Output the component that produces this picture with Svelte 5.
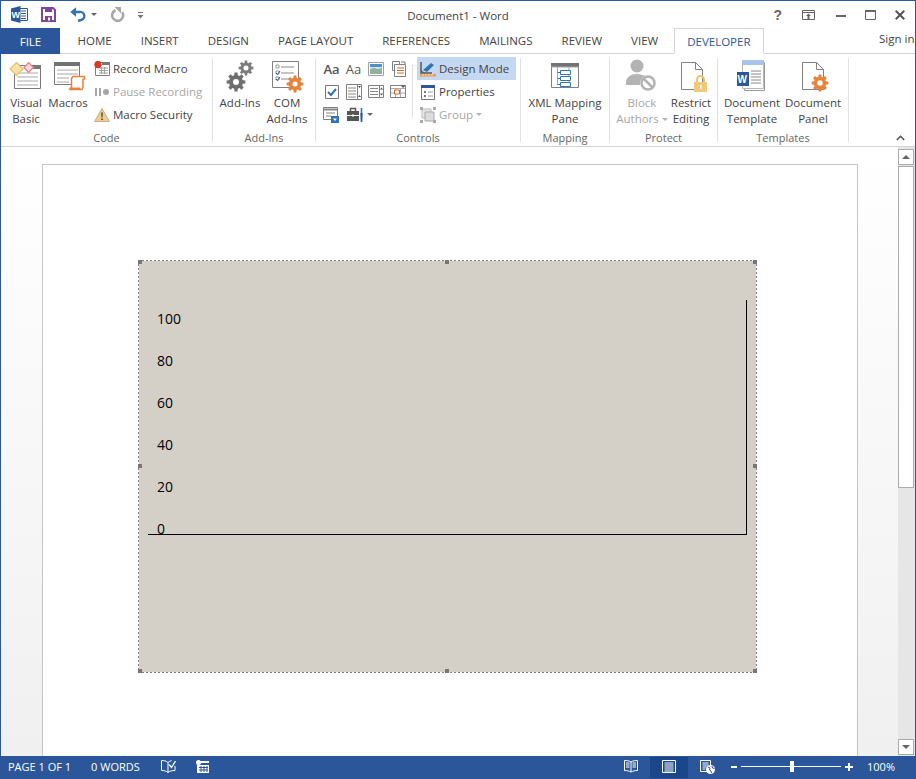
<script>
  function gear(cx, cy, R, r, hole, teeth = 8) {
    let d = '';
    const step = (Math.PI * 2) / teeth;
    for (let i = 0; i < teeth; i++) {
      const a = i * step;
      const pts = [[r, a - step * 0.34], [R, a - step * 0.2], [R, a + step * 0.2], [r, a + step * 0.34]];
      pts.forEach(([m, t], j) => {
        d += (i === 0 && j === 0 ? 'M' : 'L') + (cx + m * Math.cos(t)).toFixed(2) + ' ' + (cy + m * Math.sin(t)).toFixed(2) + ' ';
      });
    }
    d += 'Z M' + (cx + hole) + ' ' + cy + ' a' + hole + ' ' + hole + ' 0 1 0 ' + -2 * hole + ' 0 a' + hole + ' ' + hole + ' 0 1 0 ' + 2 * hole + ' 0 Z';
    return d;
  }
  const tabs = ['HOME', 'INSERT', 'DESIGN', 'PAGE LAYOUT', 'REFERENCES', 'MAILINGS', 'REVIEW', 'VIEW'];
  const ticks = [100, 80, 60, 40, 20, 0];
</script>

<div class="window">
  <header class="titlebar">
    <div class="qat">
      <svg class="q-word" width="17" height="17" viewBox="0 0 17 17">
        <path d="M6 2.500h10.500v12H6z" fill="#fff" stroke="#2b579a"/>
        <path d="M10 5h5M10 7.500h5M10 10h5M10 12.500h5" stroke="#2b579a"/>
        <path d="M0 2.500 9.500 0v17L0 14.500z" fill="#2b579a"/>
        <text x="0.600" y="11.500" class="w-mark">W</text>
      </svg>
      <svg class="q-save" width="15" height="15" viewBox="0 0 15 15">
        <path d="M1 1h11l2 2v11H1z" fill="#fff" stroke="#80459b" stroke-width="2"/>
        <path d="M4 1h7v4H4z" fill="#80459b"/>
        <path d="M4 9h7v5H4z" fill="#80459b"/>
        <path d="M7 10.500h2v3H7z" fill="#fff"/>
      </svg>
      <svg class="q-undo" width="16" height="15" viewBox="0 0 16 15">
        <path d="M3 5h6.500a4 4 0 0 1 1.500 8L8 14" fill="none" stroke="#2e75b5" stroke-width="2.400"/>
        <path d="M6 0.300v9.400L0.300 5z" fill="#2e75b5"/>
      </svg>
      <span class="caret q-c1"></span>
      <svg class="q-redo" width="15" height="15" viewBox="0 0 15 15">
        <path d="M5.500 3.200a5.500 5.500 0 1 0 6.700 2" fill="none" stroke="#a6a6a6" stroke-width="2.600"/>
        <path d="M4.500 0h6.500v6.500z" fill="#a6a6a6"/>
      </svg>
      <svg class="q-more" width="7" height="8" viewBox="0 0 7 8">
        <path d="M1 1.500h5" stroke="#777"/>
        <path d="M0.500 4h6L3.500 7.500z" fill="#777"/>
      </svg>
    </div>
    <div class="doc-title">Document1 - Word</div>
    <div class="win-ctrl">
      <span class="help">?</span>
      <svg width="13" height="10" viewBox="0 0 13 10"><path d="M.5.500h12v9H.5zM.5 2.500h12" fill="none" stroke="#666"/><path d="M6.500 3.500 9 6H7.500v3h-2V6H4z" fill="#666"/></svg>
      <svg width="10" height="3" viewBox="0 0 10 3"><path d="M0 0h10v2H0z" fill="#666"/></svg>
      <svg width="11" height="10" viewBox="0 0 11 10"><path d="M.5 1h10v8.500H.5z" fill="none" stroke="#666"/><path d="M0 0h11v2H0z" fill="#666"/></svg>
      <svg width="10" height="10" viewBox="0 0 10 10"><path d="M.7.7l8.600 8.600M9.300.7.700 9.300" stroke="#555" stroke-width="2"/></svg>
    </div>
  </header>

  <nav class="tabs">
    <div class="tab-file">FILE</div>
    <div class="tab-list">
      {#each tabs as t}<span class="tab">{t}</span>{/each}
      <span class="tab active">DEVELOPER</span>
    </div>
    <div class="signin">Sign in</div>
  </nav>

  <section class="ribbon">
    <div class="group g-code">
      <div class="body">
        <div class="big w42">
          <svg width="34" height="35" viewBox="0 0 34 35">
            <path d="M5.500 5.500h26v23h-26z" fill="#fff" stroke="#7a7a7a"/>
            <path d="M22 5h10v4H22z" fill="#777"/>
            <path d="M8 13h21M8 17h21M8 21h21M8 25h21" stroke="#a8a8a8"/>
            <path d="M7.500 2.500 14 9l-6.500 6.500L1 9z" fill="#f8e2a9" stroke="#e9bd6b" stroke-width="1.200"/>
            <path d="M19.500 2.500 24.500 7.500 19.500 12.500 15 7.500z" fill="#fbd5dc" stroke="#e77f90" stroke-width="1.200"/>
          </svg>
          <span>Visual</span><span>Basic</span>
        </div>
        <div class="big w42">
          <svg width="34" height="35" viewBox="0 0 34 35">
            <path d="M3.500 2.500h25v22h-25z" fill="#fff" stroke="#7a7a7a"/>
            <path d="M3 2h26v4H3z" fill="#737373"/>
            <path d="M6 10h21M6 14h21M6 18h12M6 22h12" stroke="#a8a8a8"/>
            <path d="M22 16.500h11.500v2.500l-1.500.5v8l-1 2H19l1.500-2v-9z" fill="#fff" stroke="#e4843a" stroke-width="1.500"/>
            <path d="M18.500 27.500h11v2h-11z" fill="#e4843a"/>
          </svg>
          <span>Macros</span>
        </div>
        <div class="smalls">
          <div class="row">
            <svg width="16" height="16" viewBox="0 0 16 16">
              <path d="M1.500 1.500h14v13h-14z" fill="#fff" stroke="#808080"/>
              <path d="M8 1h8v3H8z" fill="#777"/>
              <path d="M5 7h9M5 9.500h9M5 12h9M7.500 6v7M10.500 6v7" stroke="#a0a0a0"/>
              <circle cx="4" cy="3.500" r="3.700" fill="#d83b26"/>
            </svg>
            <span>Record Macro</span>
          </div>
          <div class="row off">
            <svg width="16" height="16" viewBox="0 0 16 16">
              <path d="M1 4h2v8H1zM5 4h2v8H5z" fill="#a6a6a6"/><circle cx="12" cy="8" r="3" fill="#a6a6a6"/>
            </svg>
            <span>Pause Recording</span>
          </div>
          <div class="row">
            <svg width="16" height="16" viewBox="0 0 16 16">
              <path d="M8 1.500 15.500 14.500H.5z" fill="#f6cb85" stroke="#bdb29c"/>
              <path d="M7.200 5.500h1.600l-.3 5h-1zM7.200 11.500h1.600v1.600H7.200z" fill="#444"/>
            </svg>
            <span>Macro Security</span>
          </div>
        </div>
      </div>
      <div class="label">Code</div>
    </div>

    <div class="group g-addins">
      <div class="body">
        <div class="big w46">
          <svg width="34" height="35" viewBox="0 0 34 35">
            <path d={gear(13, 22, 9.500, 7, 3)} fill="#6e6e6e" fill-rule="evenodd"/>
            <path d={gear(23, 8, 7.500, 5.500, 2.500)} fill="#7c7c7c" fill-rule="evenodd"/>
          </svg>
          <span>Add-Ins</span>
        </div>
        <div class="big w48">
          <svg width="34" height="35" viewBox="0 0 34 35">
            <path d="M2.500 1.500h26v26h-26z" fill="#fff" stroke="#808080"/>
            <path d="M6 5h3v3H6zM6 11h3v3H6zM6 17h3v3H6z" fill="none" stroke="#999"/>
            <path d="M11 7h13M11 13h13M11 19h8" stroke="#888"/>
            <path d="M6 13l1.500 1.500L10 11M6 19l1.500 1.500L10 17" fill="none" stroke="#2b579a"/>
            <path d={gear(25, 24, 8.500, 6.200, 2.500)} fill="#e8833a" fill-rule="evenodd"/>
          </svg>
          <span>COM</span><span>Add-Ins</span>
        </div>
      </div>
      <div class="label">Add-Ins</div>
    </div>

    <div class="group g-controls">
      <div class="body">
        <div class="ctrl-grid">
          <span class="aa bold">Aa</span>
          <span class="aa">Aa</span>
          <svg width="16" height="14" viewBox="0 0 16 14"><path d="M.5.500h15v13H.5z" fill="#fff" stroke="#a0a0a0"/><path d="M2 2h12v3H2z" fill="#4f8fc4"/><path d="M2 5h12v2H2z" fill="#d6e6ef"/><path d="M2 7l4-1 4 1 4-1v6H2z" fill="#8fb39a"/></svg>
          <svg width="15" height="16" viewBox="0 0 15 16"><path d="M1.500.5h7v9h-7z" fill="#fff" stroke="#7f7f7f"/><path d="M3.500 3.500h11v12h-11z" fill="#fff" stroke="#7f7f7f"/><path d="M6 7h7M6 9.500h7M6 12h7" stroke="#d5672b"/><path d="M10 1h4v2" fill="none" stroke="#777"/></svg>

          <svg width="14" height="14" viewBox="0 0 14 14"><path d="M.5.500h13v13H.5z" fill="#fff" stroke="#777"/><path d="M3 7l3 3 5-6" fill="none" stroke="#2e75b5" stroke-width="2"/></svg>
          <svg width="16" height="16" viewBox="0 0 16 16"><path d="M.5.500h15v15H.5z" fill="#fff" stroke="#7f7f7f"/><path d="M2 4h8M2 7h8M2 10h8M2 13h8" stroke="#888"/><path d="M11.500 1v14" stroke="#7f7f7f"/><path d="M12 2h3l-1.500 2zM13.500 11l-1.500 2h3z" fill="#555"/></svg>
          <svg width="16" height="13" viewBox="0 0 16 13"><path d="M.5.500h15v12H.5z" fill="#fff" stroke="#7f7f7f"/><path d="M2 3.500h8M2 6.500h8M2 9.500h8" stroke="#888"/><path d="M11.500 1v11" stroke="#7f7f7f"/><path d="M13.500 2.500l-1.500 2h3zM13.500 10.500 12 8.500h3z" fill="#555"/></svg>
          <svg width="16" height="13" viewBox="0 0 16 13"><path d="M.5.500h15v12H.5z" fill="#fff" stroke="#7f7f7f"/><path d="M1 3.500h14M5.500 3v9M10.500 3v9M1 8h14" stroke="#aaa"/><path d="M4.500 5h5v4h-5z" fill="#fff" stroke="#d5672b"/><path d="M11 .5h4.500L13 3z" fill="#555"/></svg>

          <svg class="combo" width="16" height="16" viewBox="0 0 16 16"><path d="M.5.500h14v12H.5z" fill="#fff" stroke="#7f7f7f"/><path d="M1 2.500h13" stroke="#888" stroke-width="2"/><path d="M3 6h9M3 9h5" stroke="#888"/><path d="M8 9h8v7H8z" fill="#2e75b5"/><path d="M10 11.500h4L12 14z" fill="#fff"/></svg>
          <span class="tool-wrap">
            <svg width="17" height="15" viewBox="0 0 17 15"><path d="M0 4h12v10H0z" fill="#555"/><path d="M3.500 4V1.500h5V4" fill="none" stroke="#555" stroke-width="1.500"/><path d="M0 8.500h12" stroke="#fff"/><path d="M5 7.500h2v2H5z" fill="#fff"/><path d="M13.700 1h1.600v5h-1.600z" fill="#2e75b5"/><path d="M13.300 6h2.400l-.4 9h-1.600z" fill="#2b579a"/></svg>
            <span class="caret"></span>
          </span>
          <i></i>
          <i></i>
        </div>
        <div class="ctrl-sep"></div>
        <div class="smalls ctrl-col">
          <div class="row on">
            <svg width="16" height="16" viewBox="0 0 16 16">
              <path d="M1 1v11h11" fill="none" stroke="#555" stroke-width="1.500"/>
              <path d="M3 9 11 2l3 2-7 7z" fill="#2e75b5"/>
              <path d="M1 9l4 3H1z" fill="#666"/>
              <path d="M0 13h16v2.500H0z" fill="#ed9c4a"/>
              <path d="M3 13v1.500M6 13v1.500M9 13v1.500M12 13v1.500" stroke="#fff"/>
            </svg>
            <span>Design Mode</span>
          </div>
          <div class="row">
            <svg width="16" height="16" viewBox="0 0 16 16">
              <path d="M1.500 1.500h13v14h-13z" fill="#fff" stroke="#777"/>
              <path d="M1 1h14v3H1z" fill="#2b579a"/>
              <path d="M4 7h2v2H4zM4 11h2v2H4z" fill="#777"/>
              <path d="M8 8h5M8 12h5" stroke="#999"/>
            </svg>
            <span>Properties</span>
          </div>
          <div class="row off">
            <svg width="16" height="16" viewBox="0 0 16 16">
              <path d="M2 2h9v9H2z" fill="#e6e6e6" stroke="#bbb"/><path d="M5 5h9v9H5z" fill="#dcdcdc" stroke="#aaa"/>
              <path d="M0 0h3v3H0zM13 0h3v3h-3zM0 13h3v3H0zM13 13h3v3h-3z" fill="#aaa"/>
            </svg>
            <span>Group</span><span class="caret light tight"></span>
          </div>
        </div>
      </div>
      <div class="label">Controls</div>
    </div>

    <div class="group g-mapping">
      <div class="body">
        <div class="big w88">
          <svg width="34" height="35" viewBox="0 0 34 35">
            <path d="M3.500 3.500h27v24h-27z" fill="#fff" stroke="#808080"/>
            <path d="M3 3h28v4H3z" fill="#737373"/>
            <path d="M9.500 7v18M3 7h28M21 7v20" stroke="#a6a6a6"/>
            <path d="M12.500 10.500h10v4h-10zM12.500 16.500h10v4h-10zM12.500 22.500h10v4h-10z" fill="#fff" stroke="#2e75b5"/>
            <path d="M9.500 12.500h3M9.500 18.500h3M9.500 24.500h3" stroke="#2e75b5"/>
          </svg>
          <span>XML Mapping</span><span>Pane</span>
        </div>
      </div>
      <div class="label">Mapping</div>
    </div>

    <div class="group g-protect">
      <div class="body">
        <div class="big w50 off">
          <svg width="34" height="35" viewBox="0 0 34 35">
            <circle cx="12" cy="6" r="6.500" fill="#b3b3b3"/>
            <path d="M1 23c0-6 5-9 11-9 3 0 6 1 8 2-3 1-5 4-5 8v1H1z" fill="#b3b3b3"/>
            <circle cx="23" cy="23" r="6.500" fill="#fff" stroke="#b3b3b3" stroke-width="2.500"/>
            <path d="M18.500 18.500l9 9" stroke="#b3b3b3" stroke-width="2.500"/>
          </svg>
          <span>Block</span><span class="auth">Authors<span class="caret light"></span></span>
        </div>
        <div class="big w48">
          <svg width="34" height="35" viewBox="0 0 34 35">
            <path d="M7.500 2.500h14l7 7v20h-21z" fill="#fff" stroke="#808080"/>
            <path d="M21.500 2.500v7h7" fill="none" stroke="#808080"/>
            <path d="M23 22v-2.500a3.500 3.500 0 0 1 7 0V22" fill="none" stroke="#f3c26d" stroke-width="2"/>
            <path d="M20 22h13v10H20z" fill="#f3c977"/>
            <path d="M26 25h1.500v4H26z" fill="#fff"/>
          </svg>
          <span>Restrict</span><span>Editing</span>
        </div>
      </div>
      <div class="label">Protect</div>
    </div>

    <div class="group g-templates">
      <div class="body">
        <div class="big w62">
          <svg width="34" height="35" viewBox="0 0 34 35">
            <path d="M9.500 2.500h20v28h-20z" fill="#fff" stroke="#999"/>
            <path d="M7.500 .5h21v28h-21z" fill="#fff" stroke="#b7b7b7"/>
            <path d="M7 0h22v5H7z" fill="#a9c4ea"/>
            <path d="M16 11h10M16 14h10M16 17h10M16 20h10M16 23h10" stroke="#888"/>
            <path d="M2 12h12v14H2z" fill="#2b579a"/>
            <text x="2.600" y="23" class="w-mark big-w">W</text>
          </svg>
          <span>Document</span><span>Template</span>
        </div>
        <div class="big w60">
          <svg width="34" height="35" viewBox="0 0 34 35">
            <path d="M6.500 2.500h14l7 7v20h-21z" fill="#fff" stroke="#808080"/>
            <path d="M20.500 2.500v7h7" fill="none" stroke="#808080"/>
            <path d={gear(24, 23, 8.500, 6.200, 2.700)} fill="#e8833a" fill-rule="evenodd"/>
          </svg>
          <span>Document</span><span>Panel</span>
        </div>
      </div>
      <div class="label">Templates</div>
    </div>

    <svg class="collapse" width="9" height="6" viewBox="0 0 9 6"><path d="M.8 5 4.500 1.300 8.200 5" fill="none" stroke="#555" stroke-width="1.600"/></svg>
  </section>

  <main class="workspace">
    <div class="page-scroll">
      <div class="page">
        <div class="chart">
          <span class="h tl"></span><span class="h tc"></span><span class="h tr"></span>
          <span class="h ml"></span><span class="h mr"></span>
          <span class="h bl"></span><span class="h bc"></span><span class="h br"></span>
          <div class="plot">
            {#each ticks as t}<div class="tick">{t}</div>{/each}
          </div>
        </div>
      </div>
    </div>
    <aside class="scrollbar">
      <div class="sb-btn"><span class="tri up"></span></div>
      <div class="sb-thumb"></div>
      <div class="sb-track"></div>
      <div class="sb-btn"><span class="tri down"></span></div>
    </aside>
  </main>

  <footer class="status">
    <span class="st-page">PAGE 1 OF 1</span>
    <span class="st-words">0 WORDS</span>
    <svg class="st-proof" width="15" height="13" viewBox="0 0 15 13"><path d="M7 2.500C5.500 1 3 .5.500.5v10c2.500 0 5 .5 6.500 2zM7 2.500C8 1.500 9 1 10.500.7M7 12.500c1.500-1.500 4-2 7-2V6" fill="none" stroke="#fff"/><path d="M8 4.500l2.500 3L14.500 1" fill="none" stroke="#fff" stroke-width="1.300"/></svg>
    <svg class="st-macro" width="13" height="13" viewBox="0 0 13 13"><path d="M3 1h10v2H3zM1 5h12v8H1z" fill="#fff"/><circle cx="2.500" cy="2.500" r="2.500" fill="#fff"/><path d="M3 7.500h9M3 10h9M5 6v6M8 6v6M11 6v6" stroke="#2b579a"/></svg>
    <div class="st-right">
      <svg class="st-read" width="14" height="13" viewBox="0 0 14 13"><path d="M7 2C5 .8 3 .5.500.5v10c2.500 0 4.500.5 6.500 1.500 2-1 4-1.500 6.500-1.500V.5C11 .5 9 .8 7 2zM7 2v10M2 3h3.500M2 5h3.500M2 7h3.500M8.500 3H12M8.500 5H12M8.500 7H12" fill="none" stroke="#fff"/></svg>
      <div class="st-print">
        <svg width="14" height="13" viewBox="0 0 14 13"><path d="M.5.500h13v12H.5zM2.500 3h9M2.500 5h9M2.500 7h9M2.500 9h9M2.500 11h9" fill="none" stroke="#fff"/></svg>
      </div>
      <svg class="st-web" width="15" height="14" viewBox="0 0 15 14"><path d="M.5.500h10v11H.5zM2.500 3h6M2.500 5h6M2.500 7h4M2.500 9h3" fill="none" stroke="#fff"/><circle cx="10.500" cy="9.500" r="4.500" fill="#fff"/><path d="M8 7l2 1-.5 2 1.500 1 .5 2M12 6l.5 2 2 .5" fill="none" stroke="#2b579a"/></svg>
      <span class="zm minus"></span>
      <div class="slider"><span class="thumb"></span></div>
      <span class="zm plus"></span>
      <span class="st-zoom">100%</span>
    </div>
  </footer>
</div>

<style>
  :global(body) { margin: 0; background: #fff; }
  .window {
    width: 916px; height: 779px; box-sizing: border-box; overflow: hidden;
    display: flex; flex-direction: column;
    border-top: 1px solid #2b579a; border-left: 1px solid #2b579a; border-right: 1px solid #2b579a;
    font-family: "Open Sans", sans-serif; font-size: 11.5px; color: #444; background: #fff;
  }
  svg { display: block; flex: none; }
  .w-mark { font-family: "Liberation Sans", sans-serif; font-weight: 700; font-size: 9px; fill: #fff; }
  .big-w { font-size: 10px; }

  .titlebar { height: 27px; flex: none; position: relative; display: flex; align-items: center; }
  .qat { display: flex; align-items: center; padding-left: 10px; }
  .q-save { margin-left: 13px; }
  .q-undo { margin-left: 14px; }
  .q-c1 { margin-left: 5px; }
  .q-redo { margin-left: 13px; }
  .q-more { margin-left: 12px; }
  .caret { display: inline-block; width: 0; height: 0; border: 3px solid transparent; border-top: 3px solid #666; border-bottom: 0; flex: none; }
  .caret.light { border-top-color: #b5b5b5; margin-left: 3px; vertical-align: middle; }
  .caret.tight { margin-left: 0; }
  .doc-title { position: absolute; left: 0; right: 0; text-align: center; top: 6px; line-height: 18px; color: #444; }
  .win-ctrl { margin-left: auto; display: flex; align-items: center; padding-right: 10px; }
  .win-ctrl svg:nth-child(2) { margin-left: 20px; }
  .win-ctrl svg:nth-child(3) { margin-left: 21px; margin-top: 3px; }
  .win-ctrl svg:nth-child(4) { margin-left: 19px; }
  .win-ctrl svg:nth-child(5) { margin-left: 19px; }
  .help { font-family: "Liberation Sans", sans-serif; font-weight: 700; font-size: 14px; color: #666; }

  .tabs { height: 26px; flex: none; display: flex; align-items: stretch; border-bottom: 1px solid #d5d5d5; box-sizing: border-box; font-size: 11.5px; }
  .tab-file { width: 59px; background: #2b579a; color: #fff; display: flex; align-items: center; justify-content: center; margin-bottom: -1px; }
  .tab-list { display: flex; padding-left: 3px; }
  .tab { padding: 0 14.500px; line-height: 25px; color: #444; white-space: nowrap; }
  .tab.active { color: #2b579a; border: 1px solid #d5d5d5; border-bottom: 1px solid #fff; height: 26px; box-sizing: border-box; padding: 0 12px 0 12.500px; margin-left: 1px; background: #fff; line-height: 26px; }
  .signin { position: absolute; left: 879px; top: 31px; white-space: nowrap; color: #444; }

  .ribbon { height: 93px; flex: none; box-sizing: border-box; position: relative; display: flex; padding-top: 4px; border-bottom: 1px solid #d5d5d5; }
  .group { height: 84px; box-sizing: border-box; border-right: 1px solid #e1e1e1; display: flex; flex-direction: column; flex: none; }
  .g-code { width: 212px; }
  .g-addins { width: 103px; }
  .g-controls { width: 205px; }
  .g-mapping { width: 89px; }
  .g-protect { width: 108px; }
  .g-templates { width: 131px; }
  .body { display: flex; margin-top: -1px; height: 73px; }
  .g-code .body { padding-left: 4px; }
  .g-addins .body { padding-left: 4px; }
  .g-controls .body { padding-left: 5px; }
  .g-protect .body { padding-left: 7px; }
  .g-templates .body { padding-left: 3px; }
  .label { margin-top: auto; margin-bottom: -3px; line-height: 14px; text-align: center; color: #666; font-size: 11px; }

  .big { display: flex; flex-direction: column; align-items: center; padding-top: 3px; line-height: 16px; white-space: nowrap; flex: none; color: #444; }
  .big svg { overflow: visible; }
  .w42 { width: 42px; }
  .w46 { width: 46px; }
  .w48 { width: 48px; }
  .w50 { width: 50px; }
  .w60 { width: 60px; }
  .w62 { width: 62px; }
  .w88 { width: 88px; }
  .big.off, .row.off { color: #a6a6a6; }
  .auth { display: inline-flex; align-items: center; }

  .smalls { display: flex; flex-direction: column; margin-left: 5px; }
  .row { height: 23px; display: flex; align-items: center; gap: 3px; white-space: nowrap; color: #444; }
  .row.on { background: #c5d8f1; }
  .ctrl-col { margin-left: 4px; width: 99px; }
  .ctrl-col .row { padding-left: 3px; }
  .ctrl-sep { width: 1px; height: 54px; background: #e1e1e1; margin-top: 7px; margin-left: 1px; }
  .ctrl-grid { width: 90px; height: 69px; display: grid; grid-template-columns: repeat(4, 22px); grid-template-rows: repeat(3, 23px); place-items: center; }
  .aa { font-size: 13px; color: #555; line-height: 16px; margin-left: -1px; }
  .aa.bold { font-weight: 600; }
  .combo { margin-right: 3px; }
  .tool-wrap { display: flex; align-items: center; gap: 3px; margin-left: 12px; }

  .collapse { position: absolute; left: 895px; top: 81px; }

  .workspace { flex: 1; min-height: 0; display: flex; background: linear-gradient(#fff, #f0f0f0); }
  .page-scroll { flex: 1; min-width: 0; padding: 17px 0 0 41px; overflow: hidden; }
  .page { width: 816px; height: 900px; box-sizing: border-box; background: #fff; border: 1px solid #c6c6c6; padding: 95px 0 0 95px; }
  .chart {
    width: 619px; height: 413px; box-sizing: border-box; position: relative;
    background-color: #d4d0c8;
    background-image:
      repeating-linear-gradient(90deg, #808080 0 2px, #fff 2px 4px),
      repeating-linear-gradient(90deg, #808080 0 2px, #fff 2px 4px),
      repeating-linear-gradient(180deg, #808080 0 2px, #fff 2px 4px),
      repeating-linear-gradient(180deg, #808080 0 2px, #fff 2px 4px);
    background-size: 100% 1px, 100% 1px, 1px 100%, 1px 100%;
    background-position: 0 0, 0 100%, 0 0, 100% 0;
    background-repeat: no-repeat;
    padding: 40px 0 0 10px;
  }
  .h { position: absolute; width: 4px; height: 4px; background: #777; }
  .tl, .ml, .bl { left: 0; }
  .tr, .mr, .br { right: 0; }
  .tc, .bc { left: 307px; }
  .tl, .tc, .tr { top: 0; }
  .ml, .mr { top: 204px; }
  .bl, .bc, .br { bottom: 0; }
  .plot { width: 599px; height: 235px; box-sizing: border-box; border-right: 1px solid #000; border-bottom: 1px solid #000; padding: 9px 0 0 9px; }
  .tick { height: 42px; line-height: 20px; font-size: 14px; color: #000; }

  .scrollbar { width: 17px; flex: none; display: flex; flex-direction: column; padding: 2px 1px 0 0; box-sizing: border-box; background: #e6e6e6; }
  .sb-btn { height: 14px; background: #fff; border: 1px solid #ababab; flex: none; display: flex; align-items: center; justify-content: center; box-sizing: content-box; width: 14px; }
  .sb-thumb { height: 322px; margin-top: 1px; background: #fff; border: 1px solid #ababab; box-sizing: border-box; flex: none; }
  .sb-track { flex: 1; }
  .sb-btn:last-child { margin-bottom: 1px; }
  .tri { width: 0; height: 0; border: 4px solid transparent; }
  .tri.up { border-top: 0; border-bottom-color: #666; }
  .tri.down { border-bottom: 0; border-top-color: #666; }

  .status { height: 23px; flex: none; box-sizing: border-box; padding-bottom: 2px; background: #2b579a; color: #fff; display: flex; align-items: center; margin: 0 -1px; font-size: 11px; position: relative; }
  .st-page { margin-left: 8px; }
  .st-words { margin-left: 20px; }
  .st-proof { margin-left: 21px; }
  .st-macro { margin-left: 20px; }
  .st-right { margin-left: auto; display: flex; align-items: center; height: 100%; }
  .st-read { margin-right: 12px; }
  .st-print { width: 38px; height: 21px; box-sizing: border-box; padding-bottom: 2px; margin: 1px 0 -1px; background: #19478a; display: flex; align-items: center; justify-content: center; }
  .st-web { margin-left: 12px; }
  .zm { background: #fff; position: relative; display: block; }
  .minus { width: 6px; height: 2px; margin-left: 16px; }
  .plus { width: 8px; height: 2px; margin-left: 4px; }
  .plus::after { content: ""; position: absolute; left: 3px; top: -3px; width: 2px; height: 8px; background: #fff; }
  .slider { width: 100px; height: 1px; background: #fff; margin-left: 4px; position: relative; }
  .thumb { position: absolute; left: 49px; top: -5px; width: 4px; height: 11px; background: #fff; }
  .st-zoom { margin-left: 14px; margin-right: 21px; font-size: 11px; }
</style>
